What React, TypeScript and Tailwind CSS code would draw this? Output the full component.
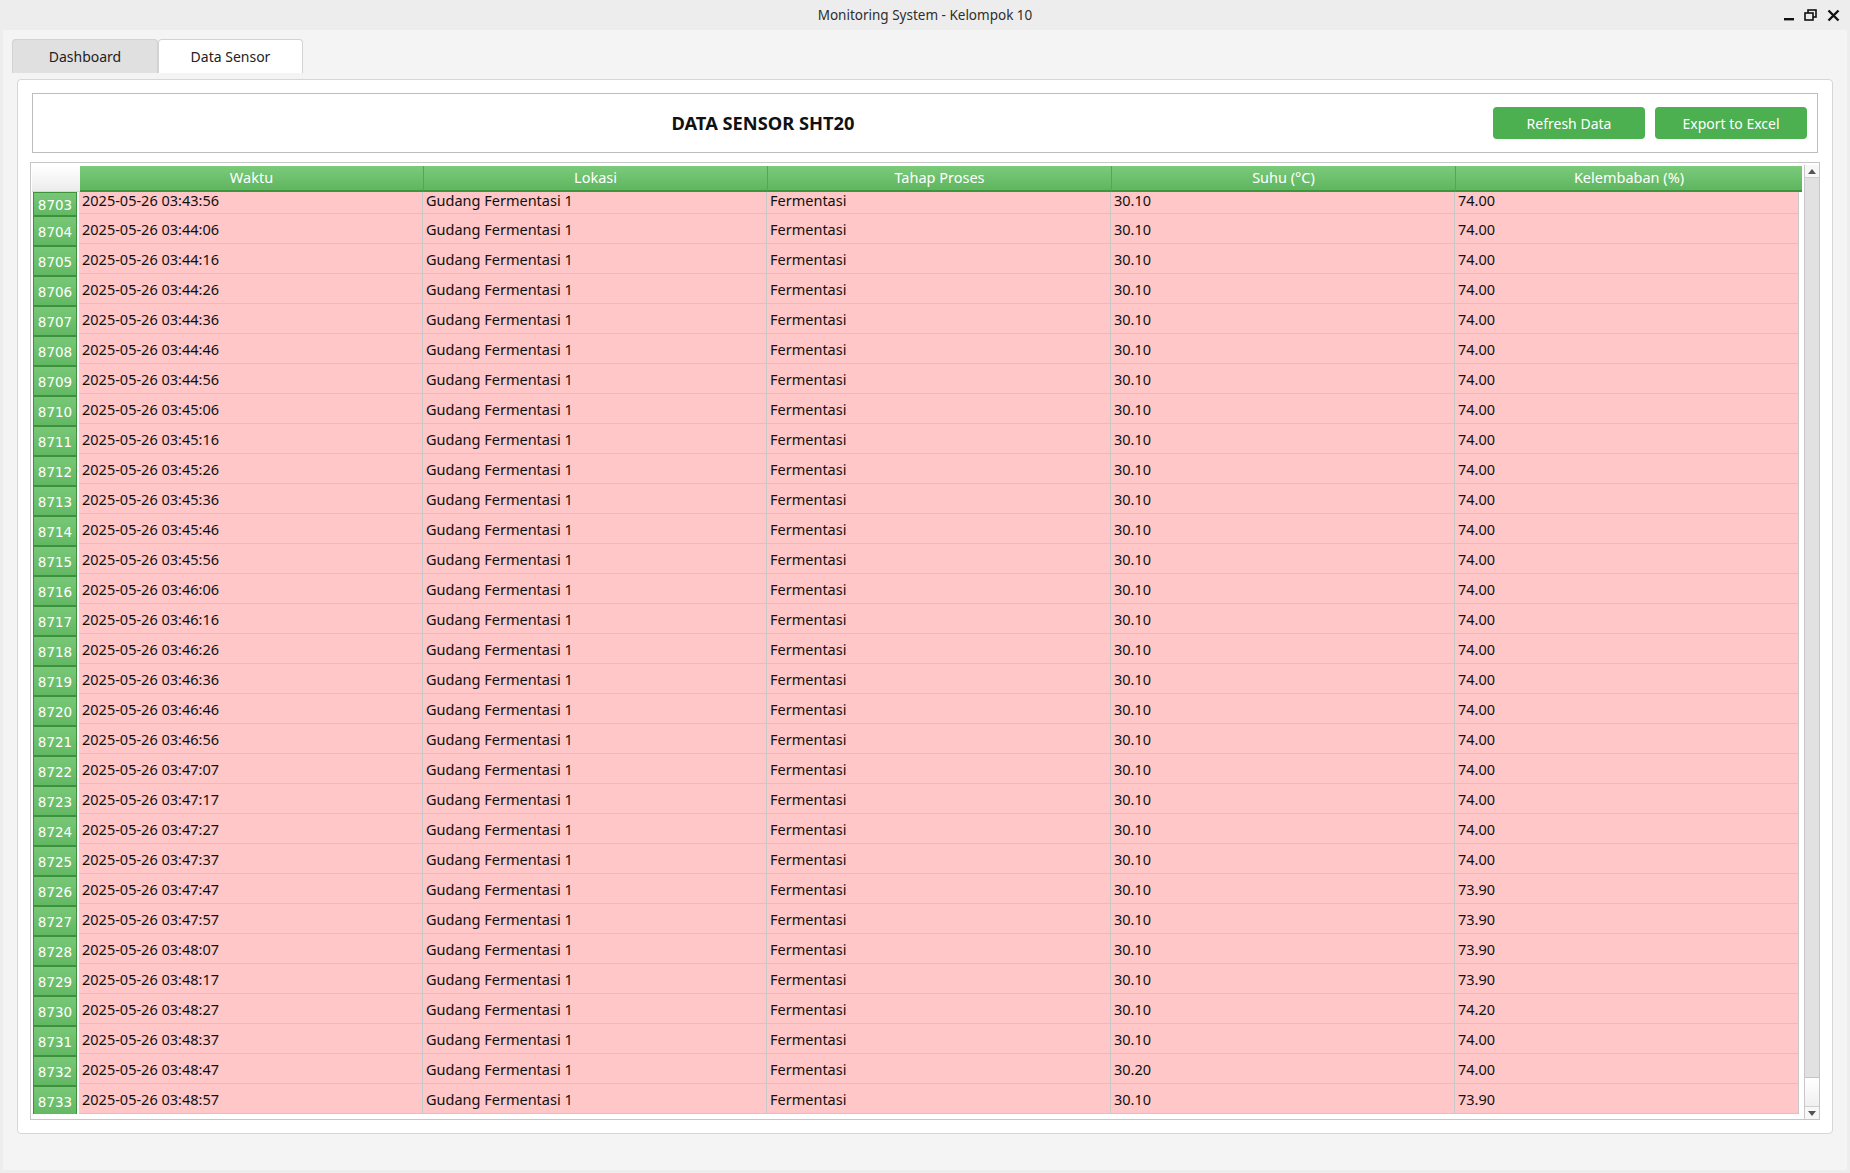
import React from "react";

const times = [
  "03:43:56","03:44:06","03:44:16","03:44:26","03:44:36","03:44:46","03:44:56",
  "03:45:06","03:45:16","03:45:26","03:45:36","03:45:46","03:45:56",
  "03:46:06","03:46:16","03:46:26","03:46:36","03:46:46","03:46:56",
  "03:47:07","03:47:17","03:47:27","03:47:37","03:47:47","03:47:57",
  "03:48:07","03:48:17","03:48:27","03:48:37","03:48:47","03:48:57",
];

const hum: Record<number, string> = {
  8726: "73.90", 8727: "73.90", 8728: "73.90", 8729: "73.90", 8730: "74.20", 8733: "73.90",
};

const rows = times.map((t, i) => {
  const id = 8703 + i;
  return {
    id,
    waktu: `2025-05-26 ${t}`,
    lokasi: "Gudang Fermentasi 1",
    tahap: "Fermentasi",
    suhu: id === 8732 ? "30.20" : "30.10",
    kelembaban: hum[id] ?? "74.00",
  };
});

const headers = ["Waktu", "Lokasi", "Tahap Proses", "Suhu (°C)", "Kelembaban (%)"];

export default function App() {
  return (
    <div
      className="w-[1850px] h-[1173px] bg-[#ededed] flex flex-col overflow-hidden text-[#1a1a1a]"
      style={{ fontFamily: '"Noto Sans", "Open Sans", sans-serif' }}
    >
      {/* Title bar */}
      <div className="h-[30px] shrink-0 relative flex items-center justify-center">
        <span className="text-[13.5px] text-[#2e2e2e]">Monitoring System - Kelompok 10</span>
        <div className="absolute right-0 top-0 h-[30px] flex items-center">
          <svg width="12" height="12" viewBox="0 0 12 12" className="absolute left-[-67px] top-[10px]">
            <rect x="1" y="8" width="10" height="2.4" fill="#111" />
          </svg>
          <svg width="13" height="13" viewBox="0 0 13 13" className="absolute left-[-46px] top-[9px]">
            <rect x="4" y="1" width="8" height="7" fill="none" stroke="#111" strokeWidth="1.6" />
            <rect x="1" y="4" width="8" height="7" fill="#ededed" stroke="#111" strokeWidth="1.6" />
          </svg>
          <svg width="13" height="13" viewBox="0 0 13 13" className="absolute left-[-23px] top-[9px]">
            <path d="M1.5 1.5 L11.5 11.5 M11.5 1.5 L1.5 11.5" stroke="#111" strokeWidth="2.4" />
          </svg>
        </div>
      </div>

      {/* Window body */}
      <div className="flex-1 mx-[3px] mb-[3px] bg-[#f4f4f4] flex flex-col px-[9px] pt-[9px]">
        {/* Tabs */}
        <div className="flex h-[34px] shrink-0">
          <div className="w-[146px] h-[34px] bg-[#e0e0e0] border border-[#d2d2d2] border-b-0 rounded-t-[4px] flex items-center justify-center text-[14px] text-[#222]">
            Dashboard
          </div>
          <div className="w-[145px] h-[34px] bg-white border border-[#d2d2d2] border-b-0 rounded-t-[4px] flex items-center justify-center text-[14px] text-[#222]">
            Data Sensor
          </div>
        </div>

        {/* Pane */}
        <div className="mt-[6px] ml-[5px] w-[1816px] h-[1055px] bg-white border border-[#d6d6d6] rounded-[4px] px-[12px] pt-[13px] flex flex-col">
          {/* Header box */}
          <div className="mx-[2px] h-[60px] shrink-0 border border-[#bdbdbd] flex items-center pr-[10px]">
            <div className="flex-1 text-center text-[18.3px] font-bold text-[#111]">DATA SENSOR SHT20</div>
            <div className="flex gap-[10px]">
              <button className="w-[152px] h-[32px] rounded-[4px] bg-[#4caf50] text-white text-[14px]">
                Refresh Data
              </button>
              <button className="w-[152px] h-[32px] rounded-[4px] bg-[#4caf50] text-white text-[14px]">
                Export to Excel
              </button>
            </div>
          </div>

          {/* Table frame */}
          <div className="mt-[9px] h-[958px] border border-[#c6c6c6] bg-white flex">
            <div className="flex-1 flex flex-col pt-[3px]">
              {/* header row */}
              <div className="flex h-[26px] shrink-0">
                <div className="w-[49px] pl-[1px]">
                  <div className="h-[26px] bg-gradient-to-b from-white to-[#ececec] border-b border-[#d8d8d8]" />
                </div>
                {headers.map((h, i) => (
                  <div
                    key={h}
                    className={`h-[26px] flex items-center justify-center text-white text-[14.5px] bg-gradient-to-b from-[#7bca7b] to-[#5fb65f] border-b-2 border-b-[#3f943f] ${i < 4 ? "w-[344px] border-r border-r-[#55a555]" : "w-[346px]"}`}
                  >
                    {h}
                  </div>
                ))}
              </div>
              {/* body */}
              <div className="h-[922px] overflow-hidden">
                {rows.map((r, idx) => {
                  const first = idx === 0;
                  return (
                    <div key={r.id} className={`flex ${first ? "h-[22px]" : "h-[30px]"}`}>
                      <div className="w-[48px] px-[2px]">
                        <div
                          className={`${first ? "h-[24px] pt-[2px]" : "h-[30px] mt-[2px] pt-[3px]"} bg-gradient-to-b from-[#78c778] to-[#62b862] border border-[#3c923c] flex items-center justify-center text-white text-[13.5px]`}
                          style={{ fontFamily: '"DejaVu Sans", sans-serif' }}
                        >
                          {r.id}
                        </div>
                      </div>
                      {[r.waktu, r.lokasi, r.tahap, r.suhu, r.kelembaban].map((v, j) => (
                        <div
                          key={j}
                          className={`w-[344px] bg-[#ffc7c7] border-b border-r border-[#c9c9c9] pl-[3px] flex text-[14.5px] text-[#111] ${first ? "h-[22px] items-start leading-[17px]" : "h-[30px] items-center leading-[20px]"}`}
                        >
                          {v}
                        </div>
                      ))}
                    </div>
                  );
                })}
              </div>
            </div>

            {/* Scrollbar */}
            <div className="w-[15px] mt-[2px] border-l border-[#c8c8c8] flex flex-col bg-[#f7f7f7]">
              <div className="h-[13px] flex items-center justify-center border-b border-[#cfcfcf]">
                <svg width="8" height="5" viewBox="0 0 8 5"><path d="M0 5 L4 0 L8 5 Z" fill="#555" /></svg>
              </div>
              <div className="h-[900px] bg-[#e1e1e1] border-b border-[#c4c4c4]" />
              <div className="flex-1 bg-gradient-to-b from-white to-[#f0f0f0]" />
              <div className="h-[13px] flex items-center justify-center border-t border-[#cfcfcf]">
                <svg width="8" height="5" viewBox="0 0 8 5"><path d="M0 0 L8 0 L4 5 Z" fill="#555" /></svg>
              </div>
            </div>
          </div>
        </div>
      </div>
    </div>
  );
}
